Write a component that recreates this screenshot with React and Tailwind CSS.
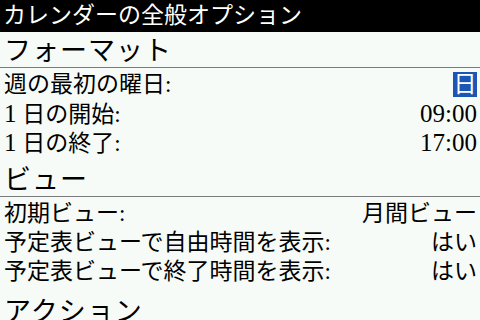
import React from "react";

const font = { fontFamily: '"Liberation Serif", "Noto Sans CJK JP", serif' };

function Header({ children, className = "" }) {
  return (
    <div className={`flex items-end px-[4px] border-b border-[#7a7a7a] text-[27px] leading-none text-black ${className}`}>
      <span className="pb-[2px] tracking-[1px]">{children}</span>
    </div>
  );
}

function Row({ label, value, selected, num }) {
  return (
    <div className="h-[29px] flex items-center justify-between pl-[4px] pr-[3px] text-[23px] leading-none text-black">
      <span>{label}</span>
      {selected ? (
        <span className="bg-[#1c56b4] text-white h-[25px] w-[24px] flex items-center justify-center">{value}</span>
      ) : (
        <span className={num ? "text-[25px]" : ""}>{value}</span>
      )}
    </div>
  );
}

export default function App() {
  return (
    <div className="w-[480px] h-[320px] overflow-hidden bg-[#f7fbf7]" style={font}>
      <div className="h-[32px] bg-black text-white text-[23px] leading-[32px] pl-[3px]">
        カレンダーの全般オプション
      </div>

      <Header className="h-[36px]">フォーマット</Header>
      <div className="pt-[2px]">
        <Row label="週の最初の曜日:" value="日" selected />
        <Row label={<><span className="text-[25px]">1</span> 日の開始:</>} value="09:00" num />
        <Row label={<><span className="text-[25px]">1</span> 日の終了:</>} value="17:00" num />
      </div>

      <Header className="h-[40px]">ビュー</Header>
      <div className="pt-[2px]">
        <Row label="初期ビュー:" value="月間ビュー" />
        <Row label="予定表ビューで自由時間を表示:" value="はい" />
        <Row label="予定表ビューで終了時間を表示:" value="はい" />
      </div>

      <Header className="h-[42px] border-b-0">アクション</Header>
    </div>
  );
}
